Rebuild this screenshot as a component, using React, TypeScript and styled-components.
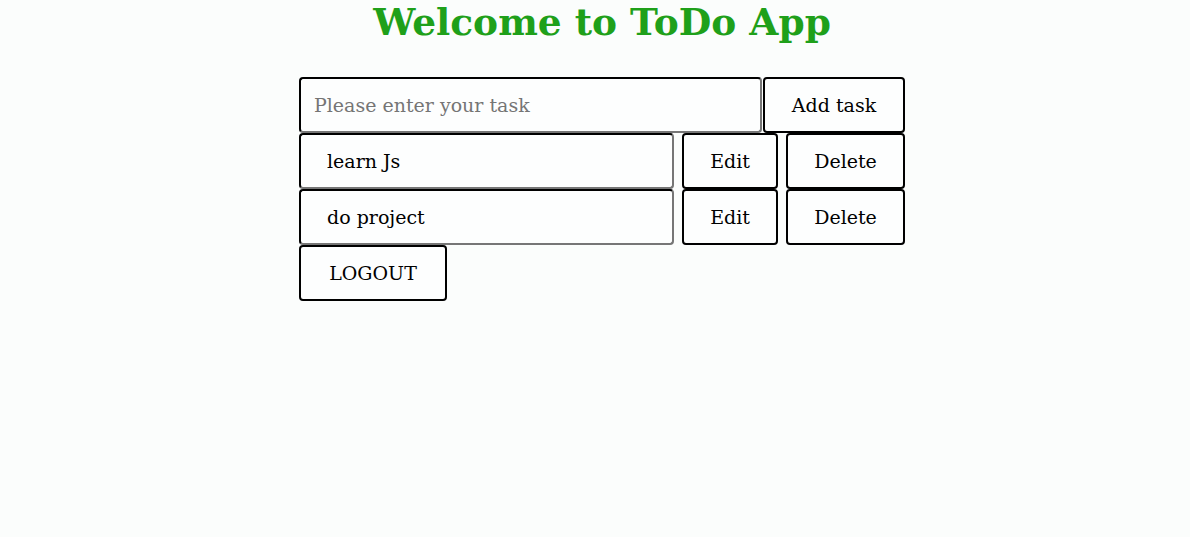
import styled, { createGlobalStyle } from "styled-components";

const GlobalStyle = createGlobalStyle`
    body {
        margin: 0;
        background: #fbfdfc;
        font-family: "DejaVu Serif", "Liberation Serif", serif;
    }
`;

const tasks = ["learn Js", "do project"];

function App() {
    return (
        <>
            <GlobalStyle />
            <Page>
                <Heading>Welcome to ToDo App</Heading>
                <Board>
                    <Row>
                        <TaskInput placeholder="Please enter your task" $wide />
                        <Button $width={142}>Add task</Button>
                    </Row>
                    {tasks.map((t) => (
                        <Row key={t} $gap>
                            <TaskInput defaultValue={t} $indent />
                            <Button $width={96}>Edit</Button>
                            <Button $width={119}>Delete</Button>
                        </Row>
                    ))}
                    <Row>
                        <Button $width={148}>LOGOUT</Button>
                    </Row>
                </Board>
            </Page>
        </>
    );
}

const Page = styled.div`
    display: flex;
    flex-direction: column;
    align-items: center;
    padding-left: 14px;
`;

const Heading = styled.h1`
    margin: 0;
    padding-top: 2px;
    height: 77px;
    box-sizing: border-box;
    font-size: 37.5px;
    font-weight: bold;
    color: #1fa01a;
    line-height: 40px;
`;

const Board = styled.div`
    width: 606px;
    display: flex;
    flex-direction: column;
`;

const Row = styled.div<{ $gap?: boolean }>`
    display: flex;
    height: 56px;
    gap: ${({ $gap }) => ($gap ? "8px" : "1px")};
`;

const TaskInput = styled.input<{ $wide?: boolean; $indent?: boolean }>`
    box-sizing: border-box;
    width: ${({ $wide }) => ($wide ? "463px" : "375px")};
    height: 56px;
    margin: 0;
    border: 2px inset #767676;
    border-top-color: #1a1a1a;
    border-left-color: #1a1a1a;
    border-radius: 4px;
    background: #fdfefe;
    padding: 0 0 0 ${({ $indent }) => ($indent ? "26px" : "13px")};
    font-family: inherit;
    font-size: 19px;
    color: #000;

    &::placeholder {
        color: #757575;
    }
`;

const Button = styled.button<{ $width: number }>`
    box-sizing: border-box;
    width: ${({ $width }) => $width}px;
    height: 56px;
    margin: 0;
    border: 2px solid #000;
    border-radius: 4px;
    background: #fdfefe;
    font-family: inherit;
    font-size: 19px;
    color: #000;
    cursor: pointer;
`;

export default App;
